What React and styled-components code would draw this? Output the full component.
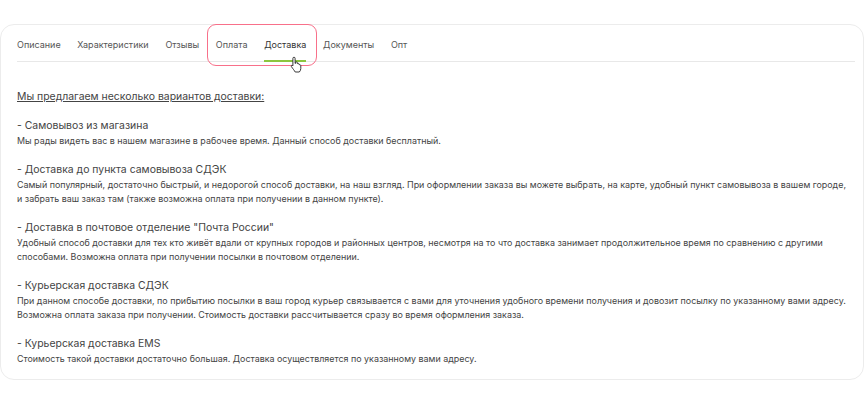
import styled, { createGlobalStyle } from "styled-components";

const Global = createGlobalStyle`
  html, body {
    margin: 0;
    padding: 0;
    background: #fff;
    font-family: Inter, "Noto Sans", sans-serif;
  }
`;

const Page = styled.div`
  width: 864px;
  height: 404px;
  box-sizing: border-box;
  padding-top: 24px;
  overflow: hidden;
`;

const Card = styled.div`
  width: 864px;
  height: 356px;
  box-sizing: border-box;
  border: 1px solid #ececec;
  border-radius: 14px;
  padding: 0 8px 0 16px;
`;

const TabBar = styled.div`
  position: relative;
  display: flex;
  gap: 16.7px;
  height: 37px;
  box-sizing: border-box;
  border-bottom: 1px solid #e8e8e8;
`;

const Tab = styled.div`
  position: relative;
  padding-top: 14px;
  font-size: 9px;
  line-height: 12px;
  color: ${(p) => (p.$active ? "#333" : "#555")};

  ${(p) =>
    p.$active &&
    `&::after {
      content: "";
      position: absolute;
      left: 0;
      right: 0;
      bottom: -1px;
      height: 2px;
      background: #8cc63f;
    }`}
`;

const Highlight = styled.div`
  position: absolute;
  left: 190px;
  top: -1px;
  width: 110px;
  height: 42px;
  box-sizing: border-box;
  border: 1.6px solid #f8708a;
  border-radius: 9px;
`;

const Pointer = styled.svg`
  position: absolute;
  left: 273px;
  top: 31px;
  width: 13px;
  height: 17px;
`;

const Body = styled.div`
  padding-top: 27px;
  color: #444;
`;

const Intro = styled.div`
  font-size: 10.45px;
  line-height: 16px;
  text-decoration: underline;
  margin-bottom: 13px;
`;

const Block = styled.div`
  margin-bottom: 13.1px;
`;

const Heading = styled.div`
  font-size: 10.45px;
  line-height: 16px;
  color: #444;
`;

const Text = styled.div`
  font-size: 8.92px;
  line-height: 14.5px;
  color: #444;
  white-space: nowrap;
`;

const tabs = ["Описание", "Характеристики", "Отзывы", "Оплата", "Доставка", "Документы", "Опт"];

const blocks = [
  {
    title: "- Самовывоз из магазина",
    lines: ["Мы рады видеть вас в нашем магазине в рабочее время. Данный способ доставки бесплатный."],
  },
  {
    title: "- Доставка до пункта самовывоза СДЭК",
    lines: [
      "Самый популярный, достаточно быстрый, и недорогой способ доставки, на наш взгляд. При оформлении заказа вы можете выбрать, на карте, удобный пункт самовывоза в вашем городе,",
      "и забрать ваш заказ там (также возможна оплата при получении в данном пункте).",
    ],
  },
  {
    title: '- Доставка в почтовое отделение "Почта России"',
    lines: [
      "Удобный способ доставки для тех кто живёт вдали от крупных городов и районных центров, несмотря на то что доставка занимает продолжительное время по сравнению с другими",
      "способами. Возможна оплата при получении посылки в почтовом отделении.",
    ],
  },
  {
    title: "- Курьерская доставка СДЭК",
    lines: [
      "При данном способе доставки, по прибытию посылки в ваш город курьер связывается с вами для уточнения удобного времени получения и довозит посылку по указанному вами адресу.",
      "Возможна оплата заказа при получении. Стоимость доставки рассчитывается сразу во время оформления заказа.",
    ],
  },
  {
    title: "- Курьерская доставка EMS",
    lines: ["Стоимость такой доставки достаточно большая. Доставка осуществляется по указанному вами адресу."],
  },
];

const App = () => {
  return (
    <Page>
      <Global />
      <Card>
        <TabBar>
          {tabs.map((t) => (
            <Tab key={t} $active={t === "Доставка"}>{t}</Tab>
          ))}
          <Highlight />
          <Pointer viewBox="0 0 13 17">
            <path
              d="M4 1.2c.7 0 1.1.5 1.1 1.2v5l.6-.1V6.2c.8-.5 1.5-.3 1.7.4v1c.7-.4 1.4-.3 1.7.4v.8c.8-.3 1.6 0 1.7.8v3c0 1.5-.8 2.6-1.5 3.4H5.2C4.4 14.5 3 13 1.4 10.6c-.5-.8.2-1.6 1-1.2l.5.5V2.4C2.9 1.7 3.3 1.2 4 1.2z"
              fill="#fff"
              stroke="#222"
              strokeWidth="0.9"
              strokeLinejoin="round"
            />
          </Pointer>
        </TabBar>
        <Body>
          <Intro>Мы предлагаем несколько вариантов доставки:</Intro>
          {blocks.map((b) => (
            <Block key={b.title}>
              <Heading>{b.title}</Heading>
              {b.lines.map((l) => (
                <Text key={l}>{l}</Text>
              ))}
            </Block>
          ))}
        </Body>
      </Card>
    </Page>
  );
};

export default App;
